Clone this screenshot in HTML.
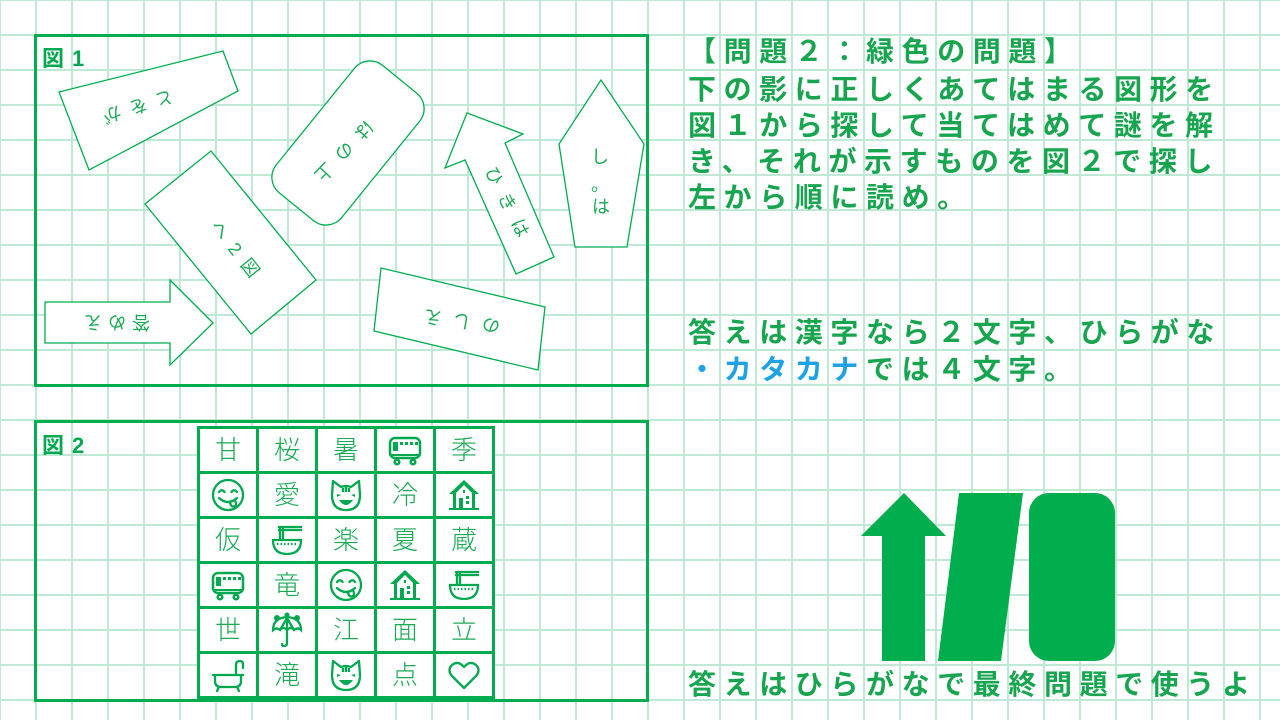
<!DOCTYPE html>
<html><head><meta charset="utf-8"><style>
html,body{margin:0;padding:0}
body{width:1280px;height:720px;position:relative;overflow:hidden;background-color:#fff;
background-image:linear-gradient(to right,#bfe9d4 2px,transparent 2px),linear-gradient(to bottom,#bfe9d4 2px,transparent 2px);
background-size:36px 35px;background-position:-1px -1px;
font-family:"Liberation Sans","Noto Sans CJK JP",sans-serif;color:#00a84f}
.frame{position:absolute;border:3px solid #00ad4e;box-sizing:border-box}
.lbl{position:absolute;font-size:22px;font-weight:bold;color:#00a84f;letter-spacing:8px}
.t{position:absolute;left:688px;font-size:28px;letter-spacing:7.6px;white-space:nowrap;line-height:36px;font-weight:bold;color:#17a64f}
.b{color:#1ea2e6}
table{position:absolute;left:197px;top:426px;border-collapse:collapse;background:#fff;table-layout:fixed}
td{border:3px solid #00ad4e;width:56px;height:42px;padding:0;text-align:center;vertical-align:middle;font-size:26px;color:#1aaa55;font-weight:300;line-height:1;box-sizing:content-box}
td svg{display:block;margin:auto}
</style></head><body>
<div class="frame" style="left:34px;top:34px;width:615px;height:353px"></div>
<div class="frame" style="left:34px;top:420px;width:615px;height:282px"></div>
<div class="lbl" style="left:42px;top:41px">図1</div>
<div class="lbl" style="left:42px;top:428px">図2</div>

<svg width="1280" height="720" style="position:absolute;left:0;top:0" font-family="Liberation Sans, Noto Sans CJK JP, sans-serif">
<g fill="#fff" stroke="#00ad4e" stroke-width="1.3">
<polygon points="59,92 223,51 238,91 89,170"/>
<rect x="-82" y="-42" width="164" height="84" rx="20" transform="translate(348,143) rotate(-51)"/>
<polygon points="145,204 211,151 316,280 251,334"/>
<polygon points="45,302 170,302 170,280 213,323 170,365 170,343 45,343"/>
<polygon points="467,113 523,134 505,143 554,257 516,274 465,160 445,168"/>
<polygon points="601,80 644,144 627,247 575,247 559,144"/>
<polygon points="381,268 545,307 538,370 374,331"/>
</g>
<g fill="#1aaa55" font-size="18" text-anchor="middle" dominant-baseline="central">
<text x="164" y="98" transform="rotate(162 164 98)">と</text>
<text x="138" y="106" transform="rotate(162 138 106)">を</text>
<text x="112" y="114" transform="rotate(162 112 114)">が</text>
<text x="364" y="130" transform="rotate(134 364 130)">は</text>
<text x="344" y="151" transform="rotate(134 344 151)">の</text>
<text x="324" y="172" transform="rotate(134 324 172)">上</text>
<text x="220" y="230" transform="rotate(51 220 230)">へ</text>
<text x="235" y="249" transform="rotate(51 235 249)">2</text>
<text x="250" y="268" transform="rotate(51 250 268)">図</text>
<text x="141" y="322" transform="rotate(180 141 322)">答</text>
<text x="117" y="322" transform="rotate(180 117 322)">め</text>
<text x="93" y="322" transform="rotate(180 93 322)">え</text>
<text x="494" y="176" transform="rotate(64 494 176)">ひ</text>
<text x="507" y="202" transform="rotate(64 507 202)">き</text>
<text x="520" y="228" transform="rotate(64 520 228)">は</text>
<text x="600" y="157">し</text>
<text x="600" y="185">。</text>
<text x="601" y="207">は</text>
<text x="491" y="325" transform="rotate(188 491 325)">の</text>
<text x="462" y="321" transform="rotate(188 462 321)">し</text>
<text x="433" y="317" transform="rotate(188 433 317)">え</text>
</g>
<g fill="#00ae4e">
<polygon points="904,493 946,536 925,536 925,661 882,661 882,536 861,536"/>
<polygon points="959,493 1023,493 1001,661 938,661"/>
<rect x="1029" y="493" width="86" height="168" rx="20"/>
</g>
<defs>
<symbol id="train" viewBox="0 0 36 36"><g fill="none" stroke="#00a84f" stroke-width="2.5"><rect x="3" y="6" width="30" height="20" rx="5"/><circle cx="10" cy="30" r="2.3"/><circle cx="26" cy="30" r="2.3"/></g><g fill="#00a84f"><rect x="6" y="10" width="5" height="9"/><rect x="13" y="10" width="3" height="3"/><rect x="18" y="10" width="3" height="3"/><rect x="23" y="10" width="3" height="3"/><rect x="28" y="10" width="3" height="3"/><rect x="3" y="22" width="30" height="2"/></g></symbol>
<symbol id="smile" viewBox="0 0 36 36"><g fill="none" stroke="#00a84f" stroke-width="2.3" stroke-linecap="round"><circle cx="18" cy="18" r="15"/><path d="M9 15q2.8-3.5 5.6 0M21.4 15q2.8-3.5 5.6 0M9 21q9 8 18 0M20 25q1 6 5 4q2-1 0-6"/></g></symbol>
<symbol id="cat" viewBox="0 0 36 36"><g fill="none" stroke="#00a84f" stroke-width="2.3" stroke-linejoin="round"><path d="M5 4L13 10Q18 8 23 10L31 4L32 18Q32 33 18 33Q4 33 4 18Z"/><path d="M15 11v4M18 10v5M21 11v4"/></g><g fill="#00a84f"><path d="M9 17l4 1-4 2zM27 17l-4 1 4 2zM11 23q7 10 14 0z"/></g></symbol>
<symbol id="house" viewBox="0 0 36 36"><path d="M18 3L3 17H7V33H29V17H33Z" fill="#00a84f"/><g fill="#fff"><path d="M18 8L10 16V31H26V16Z"/></g><g fill="#00a84f"><rect x="13" y="21" width="4" height="10"/><rect x="20" y="19" width="3" height="3"/><rect x="20" y="24" width="3" height="3"/><rect x="17" y="13" width="2" height="3"/><rect x="3" y="31" width="30" height="2"/></g></symbol>
<symbol id="ramen" viewBox="0 0 36 36"><g fill="none" stroke="#00a84f" stroke-width="2.3"><path d="M4 18H32Q32 32 18 32Q4 32 4 18Z"/><path d="M9 5H33M9 8H33M11 5V18M14 5V18"/><path d="M8 22H28" stroke-dasharray="1.5 2"/></g></symbol>
<symbol id="umb" viewBox="0 0 36 36"><g fill="none" stroke="#00a84f" stroke-width="2.3" stroke-linecap="round"><path d="M4 18Q4 6 18 5Q32 6 32 18Q29 15 25 18Q22 14 18 18Q14 14 11 18Q7 15 4 18Z"/><path d="M18 6V31q0 3-3 3q-2 0-2-2M11 18L18 6L25 18"/></g><g fill="#00a84f"><circle cx="8" cy="6" r="3"/><circle cx="28" cy="6" r="3"/><circle cx="18" cy="3" r="2.5"/></g></symbol>
<symbol id="bath" viewBox="0 0 36 36"><g fill="none" stroke="#00a84f" stroke-width="2.3" stroke-linecap="round"><path d="M3 18H33M5 18V24Q5 30 11 30H25Q31 30 31 24V18M9 30l-2 4M27 30l2 4M26 18V8q0-4 4-4q3 0 3 4v3"/></g></symbol>
<symbol id="heart" viewBox="0 0 36 36"><path d="M18 31L6 19Q1 13 6 8Q12 3 18 10Q24 3 30 8Q35 13 30 19Z" fill="none" stroke="#00a84f" stroke-width="2.3" stroke-linejoin="round"/></symbol>
</defs>
</svg>

<table>
<tr><td>甘</td><td>桜</td><td>暑</td><td><svg width="36" height="36"><use href="#train"/></svg></td><td>季</td></tr>
<tr><td><svg width="36" height="36"><use href="#smile"/></svg></td><td>愛</td><td><svg width="36" height="36"><use href="#cat"/></svg></td><td>冷</td><td><svg width="36" height="36"><use href="#house"/></svg></td></tr>
<tr><td>仮</td><td><svg width="36" height="36"><use href="#ramen"/></svg></td><td>楽</td><td>夏</td><td>蔵</td></tr>
<tr><td><svg width="36" height="36"><use href="#train"/></svg></td><td>竜</td><td><svg width="36" height="36"><use href="#smile"/></svg></td><td><svg width="36" height="36"><use href="#house"/></svg></td><td><svg width="36" height="36"><use href="#ramen"/></svg></td></tr>
<tr><td>世</td><td><svg width="36" height="36"><use href="#umb"/></svg></td><td>江</td><td>面</td><td>立</td></tr>
<tr><td><svg width="36" height="36"><use href="#bath"/></svg></td><td>滝</td><td><svg width="36" height="36"><use href="#cat"/></svg></td><td>点</td><td><svg width="36" height="36"><use href="#heart"/></svg></td></tr>
</table>

<div class="t" style="top:34px">【問題２：緑色の問題】</div>
<div class="t" style="top:72px">下の影に正しくあてはまる図形を</div>
<div class="t" style="top:108px">図１から探して当てはめて謎を解</div>
<div class="t" style="top:144px">き、それが示すものを図２で探し</div>
<div class="t" style="top:180px">左から順に読め。</div>
<div class="t" style="top:315px">答えは漢字なら２文字、ひらがな</div>
<div class="t" style="top:352px"><span class="b">・カタカナ</span>では４文字。</div>
<div class="t" style="top:667px">答えはひらがなで最終問題で使うよ</div>
</body></html>
